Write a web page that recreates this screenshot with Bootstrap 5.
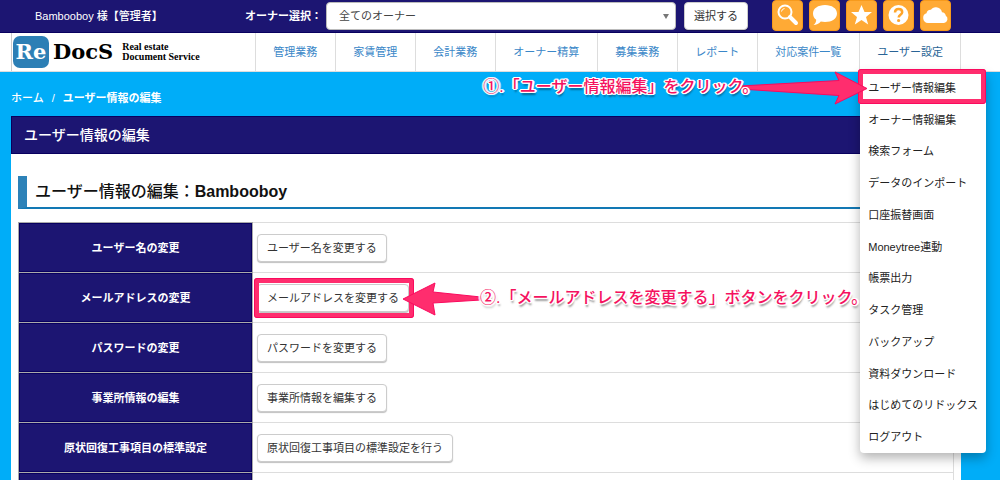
<!DOCTYPE html>
<html lang="ja">
<head>
<meta charset="utf-8">
<meta name="viewport" content="width=device-width, initial-scale=1">
<title>ユーザー情報の編集 | ReDocS</title>
<link rel="stylesheet" href="https://cdn.jsdelivr.net/npm/bootstrap@5.3.0/dist/css/bootstrap.min.css">
<style>
:root { --navy: #1c1572; --navy-edge: #08005f; --sky: #00adf8; --pink: #ff2d6e; --pink-edge: #fa0a5e; }
body { font: 11px/16px "Liberation Sans", "Noto Sans CJK JP", sans-serif; color: #333; background: var(--sky); }
a { text-decoration: none; }

.topbar { background: var(--navy); border-bottom: 1px solid var(--navy-edge); height: 33px; padding: 0 49px 0 35px; color: #fff; }
.user-name { width: 210px; font-weight: 500; }
.owner-select { font-size: 11px; line-height: 16px; color: #444; height: 28px; padding: 5px 24px 5px 12px; border: 1px solid #bbb; border-radius: 4px;
  background: #fff url("data:image/svg+xml,%3Csvg xmlns='http://www.w3.org/2000/svg' viewBox='0 0 6 5'%3E%3Cpath d='M0 0h6L3 5z' fill='%23777'/%3E%3C/svg%3E") no-repeat right 6px center / 6px 5px; }
.plain-btn { font-size: 11px; line-height: 16px; color: #333; background: #fff; border: 1px solid #ccc; border-radius: 4px; padding: 5px 9px; box-shadow: 0 1px 1px rgba(0,0,0,.25); }
.icon-row { gap: 6px; }
.icon-btn { width: 31px; height: 31px; padding: 0; border: 1px solid #f79a1c; border-radius: 4px; background: #ffaa35; }
.icon-btn svg { display: block; width: 29px; height: 29px; }

.mainnav { background: #fff; border-bottom: 1px solid #ddd; padding: 0 39px 0 11px; }
.brand { border-left: 1px solid #ccc; height: 38px; padding-left: 1px; color: #000; font-family: "DejaVu Serif", serif; font-weight: 700; font-size: 21px; line-height: 32px; }
.brand-re { background: #2c7fb5; color: #fff; border-radius: 7px; width: 36px; height: 32px; text-align: center; font-size: 21px; }
.brand-tag { font: 700 10px/10px "Liberation Serif", serif; margin-left: 9px; }
.nav-cell { border-left: 1px solid #ddd; position: relative; }
.nav-cell:last-child { border-right: 1px solid #ddd; }
.nav-cell > a { display: block; padding: 11px 18px 11px 17px; color: #3a87c8; white-space: nowrap; }
.nav-cell:last-child > a { color: #2a6496; padding-right: 17px; }

.user-menu { position: absolute; top: 100%; left: 0; z-index: 5; width: 126px; height: 382px; padding-top: 1px; display: grid; grid-auto-rows: 1fr; background: #fff; border-radius: 0 0 4px 4px; box-shadow: 0 5px 12px rgba(0,0,0,.3); }
.user-menu li { position: relative; display: flex; align-items: center; padding-left: 8px; }
.user-menu a { color: #222; white-space: nowrap; }

.crumbs { padding: 18px 11px 10px; color: #fff; }
.crumbs a { color: #fff; font-weight: 500; }
.panel { margin: 0 39px 0 11px; background: #fff; }
.panel-title { background: var(--navy); border: 1px solid var(--navy-edge); color: #fff; font-size: 14px; line-height: 20px; font-weight: 500; padding: 8px 12px; margin: 0; }
.panel-body { padding: 22px 7px 0; }
.section-title { font-size: 16px; line-height: 24px; font-weight: 500; color: #111; border-left: 9px solid #2d82b8; border-bottom: 2px solid #1278b4; padding: 4px 0 3px 8px; margin: 0 0 13px; }
.settings { width: 100%; border-collapse: collapse; }
.settings th, .settings td { border: 1px solid #ddd; height: 50px; padding: 0 4px; }
.settings th { width: 234px; background: var(--navy); color: #fff; text-align: center; border-color: #aaa; box-shadow: inset 0 0 0 1px var(--navy-edge); }

.marked { position: absolute; border: 5px solid var(--pink); outline: 1px solid var(--pink-edge); outline-offset: -1px; border-radius: 3px; pointer-events: none; }
.note { position: absolute; z-index: 6; white-space: nowrap; font-size: 16px; line-height: 24px; font-weight: 500; color: #f5125f;
  text-shadow: 1px 0 #fff, -1px 0 #fff, 0 1px #fff, 0 -1px #fff, 1px 1px #fff, -1px -1px #fff, 1px -1px #fff, -1px 1px #fff, 2px 0 #fff, -2px 0 #fff, 1px 3px 2px rgba(0,0,0,.45); }
.arrow { position: absolute; z-index: 6; overflow: visible; fill: var(--pink); stroke: var(--pink-edge); stroke-width: 1; }
.mark-menu { inset: -3px 0 0 -2px; }
.arrow-menu { right: 118px; top: -1px; width: 128px; height: 34px; }
.note-menu { right: 228px; top: 3px; z-index: 7; }
.mark-mail { inset: -6px -5px -6px -3px; }
.arrow-mail { left: 146px; top: -2px; width: 80px; height: 34px; }
.note-mail { left: 223px; top: 2px; }
</style>
</head>
<body class="vh-100 overflow-hidden">
<header>
  <div class="topbar d-flex align-items-center">
    <div class="user-name flex-shrink-0">Bambooboy 様【管理者】</div>
    <label for="owner" class="fw-bold flex-shrink-0 me-1">オーナー選択：</label>
    <select id="owner" class="form-select owner-select"><option>全てのオーナー</option></select>
    <button type="button" class="plain-btn flex-shrink-0 ms-2">選択する</button>
    <div class="icon-row d-flex flex-shrink-0 ms-4 align-self-start">
      <button type="button" class="icon-btn" aria-label="検索"><svg viewBox="0 0 29 29"><circle cx="12" cy="11" r="6.5" fill="none" stroke="#fff" stroke-width="2"/><path d="M8.5 10.500a3.500 3.500 0 0 1 3-3" fill="none" stroke="#fff"/><path d="M17 16l6 6" stroke="#fff" stroke-width="4" stroke-linecap="round"/></svg></button>
      <button type="button" class="icon-btn" aria-label="メッセージ"><svg viewBox="0 0 29 29"><path fill="#fff" d="M15 4c7 0 12 3.500 12 8.500S22 21 15 21c-1.500 0-3-.2-4.200-.5C9 22.700 6.500 24 3.500 24c1.700-1.300 2.700-3 2.700-5.200C4 17.200 3 15 3 12.500 3 7.500 8 4 15 4z"/></svg></button>
      <button type="button" class="icon-btn" aria-label="お気に入り"><svg viewBox="0 0 29 29"><path fill="#fff" d="M14.500 4l3 7h7.500l-6 5 2.200 7.500-6.700-4.500-6.700 4.500L10 16l-6-5h7.500z"/></svg></button>
      <button type="button" class="icon-btn" aria-label="ヘルプ"><svg viewBox="0 0 29 29"><circle cx="14.500" cy="14" r="10" fill="#fff"/><path d="M11 11.500c0-2 1.500-3.500 3.600-3.500s3.600 1.300 3.600 3.200c0 2.600-3.500 2.600-3.500 5.300" fill="none" stroke="#ffa52a" stroke-width="2.500"/><circle cx="14.600" cy="19.500" r="1.600" fill="#ffa52a"/></svg></button>
      <button type="button" class="icon-btn" aria-label="クラウド"><svg viewBox="0 0 29 29"><path fill="#fff" d="M7 22a5 5 0 0 1-1.500-9.700 4 4 0 0 1 4.500-3.500C11 7 13 6 15.200 6.200c3 .2 5.300 2.300 5.800 5 2 .1 3.500 1.500 3.700 3.200A4.200 4.200 0 0 1 23 22z"/></svg></button>
    </div>
  </div>
  <nav class="mainnav d-flex">
    <a href="#" class="brand d-flex align-items-center">
      <span class="brand-re">Re</span><span class="ps-1">DocS</span>
      <span class="brand-tag">Real estate<br>Document Service</span>
    </a>
    <ul class="list-unstyled d-flex mb-0 ms-auto">
      <li class="nav-cell"><a href="#">管理業務</a></li>
      <li class="nav-cell"><a href="#">家賃管理</a></li>
      <li class="nav-cell"><a href="#">会計業務</a></li>
      <li class="nav-cell"><a href="#">オーナー精算</a></li>
      <li class="nav-cell"><a href="#">募集業務</a></li>
      <li class="nav-cell"><a href="#">レポート</a></li>
      <li class="nav-cell"><a href="#">対応案件一覧</a></li>
      <li class="nav-cell"><a href="#">ユーザー設定</a>
        <ul class="user-menu list-unstyled">
          <li><a href="#">ユーザー情報編集</a>
            <span class="marked mark-menu"></span>
            <svg class="arrow arrow-menu" viewBox="0 0 128 34"><path d="M0 15L99 9.500 95 1l32 16.500L95 33l4-8.500L0 18z"/></svg>
            <span class="note note-menu">①.「ユーザー情報編集」をクリック。</span></li>
          <li><a href="#">オーナー情報編集</a></li>
          <li><a href="#">検索フォーム</a></li>
          <li><a href="#">データのインポート</a></li>
          <li><a href="#">口座振替画面</a></li>
          <li><a href="#">Moneytree連動</a></li>
          <li><a href="#">帳票出力</a></li>
          <li><a href="#">タスク管理</a></li>
          <li><a href="#">バックアップ</a></li>
          <li><a href="#">資料ダウンロード</a></li>
          <li><a href="#">はじめてのリドックス</a></li>
          <li><a href="#">ログアウト</a></li>
        </ul>
      </li>
    </ul>
  </nav>
</header>
<div class="crumbs d-flex gap-2"><a href="#">ホーム</a><span>/</span><strong>ユーザー情報の編集</strong></div>
<main class="panel">
  <h1 class="panel-title">ユーザー情報の編集</h1>
  <div class="panel-body">
    <h2 class="section-title">ユーザー情報の編集：<span class="fw-bold">Bambooboy</span></h2>
    <table class="settings">
      <tr><th scope="row">ユーザー名の変更</th><td><button type="button" class="plain-btn">ユーザー名を変更する</button></td></tr>
      <tr><th scope="row">メールアドレスの変更</th><td><div class="position-relative d-inline-block"><button type="button" class="plain-btn">メールアドレスを変更する</button>
        <span class="marked mark-mail"></span>
        <svg class="arrow arrow-mail" viewBox="0 0 80 34"><path d="M0 17L32 1l-2 9 48 5v3l-48 3 2 12z"/></svg>
        <span class="note note-mail">②.「メールアドレスを変更する」ボタンをクリック。</span></div></td></tr>
      <tr><th scope="row">パスワードの変更</th><td><button type="button" class="plain-btn">パスワードを変更する</button></td></tr>
      <tr><th scope="row">事業所情報の編集</th><td><button type="button" class="plain-btn">事業所情報を編集する</button></td></tr>
      <tr><th scope="row">原状回復工事項目の標準設定</th><td><button type="button" class="plain-btn">原状回復工事項目の標準設定を行う</button></td></tr>
      <tr><th></th><td></td></tr>
    </table>
  </div>
</main>
<script src="https://cdn.jsdelivr.net/npm/bootstrap@5.3.0/dist/js/bootstrap.bundle.min.js"></script>
</body>
</html>
